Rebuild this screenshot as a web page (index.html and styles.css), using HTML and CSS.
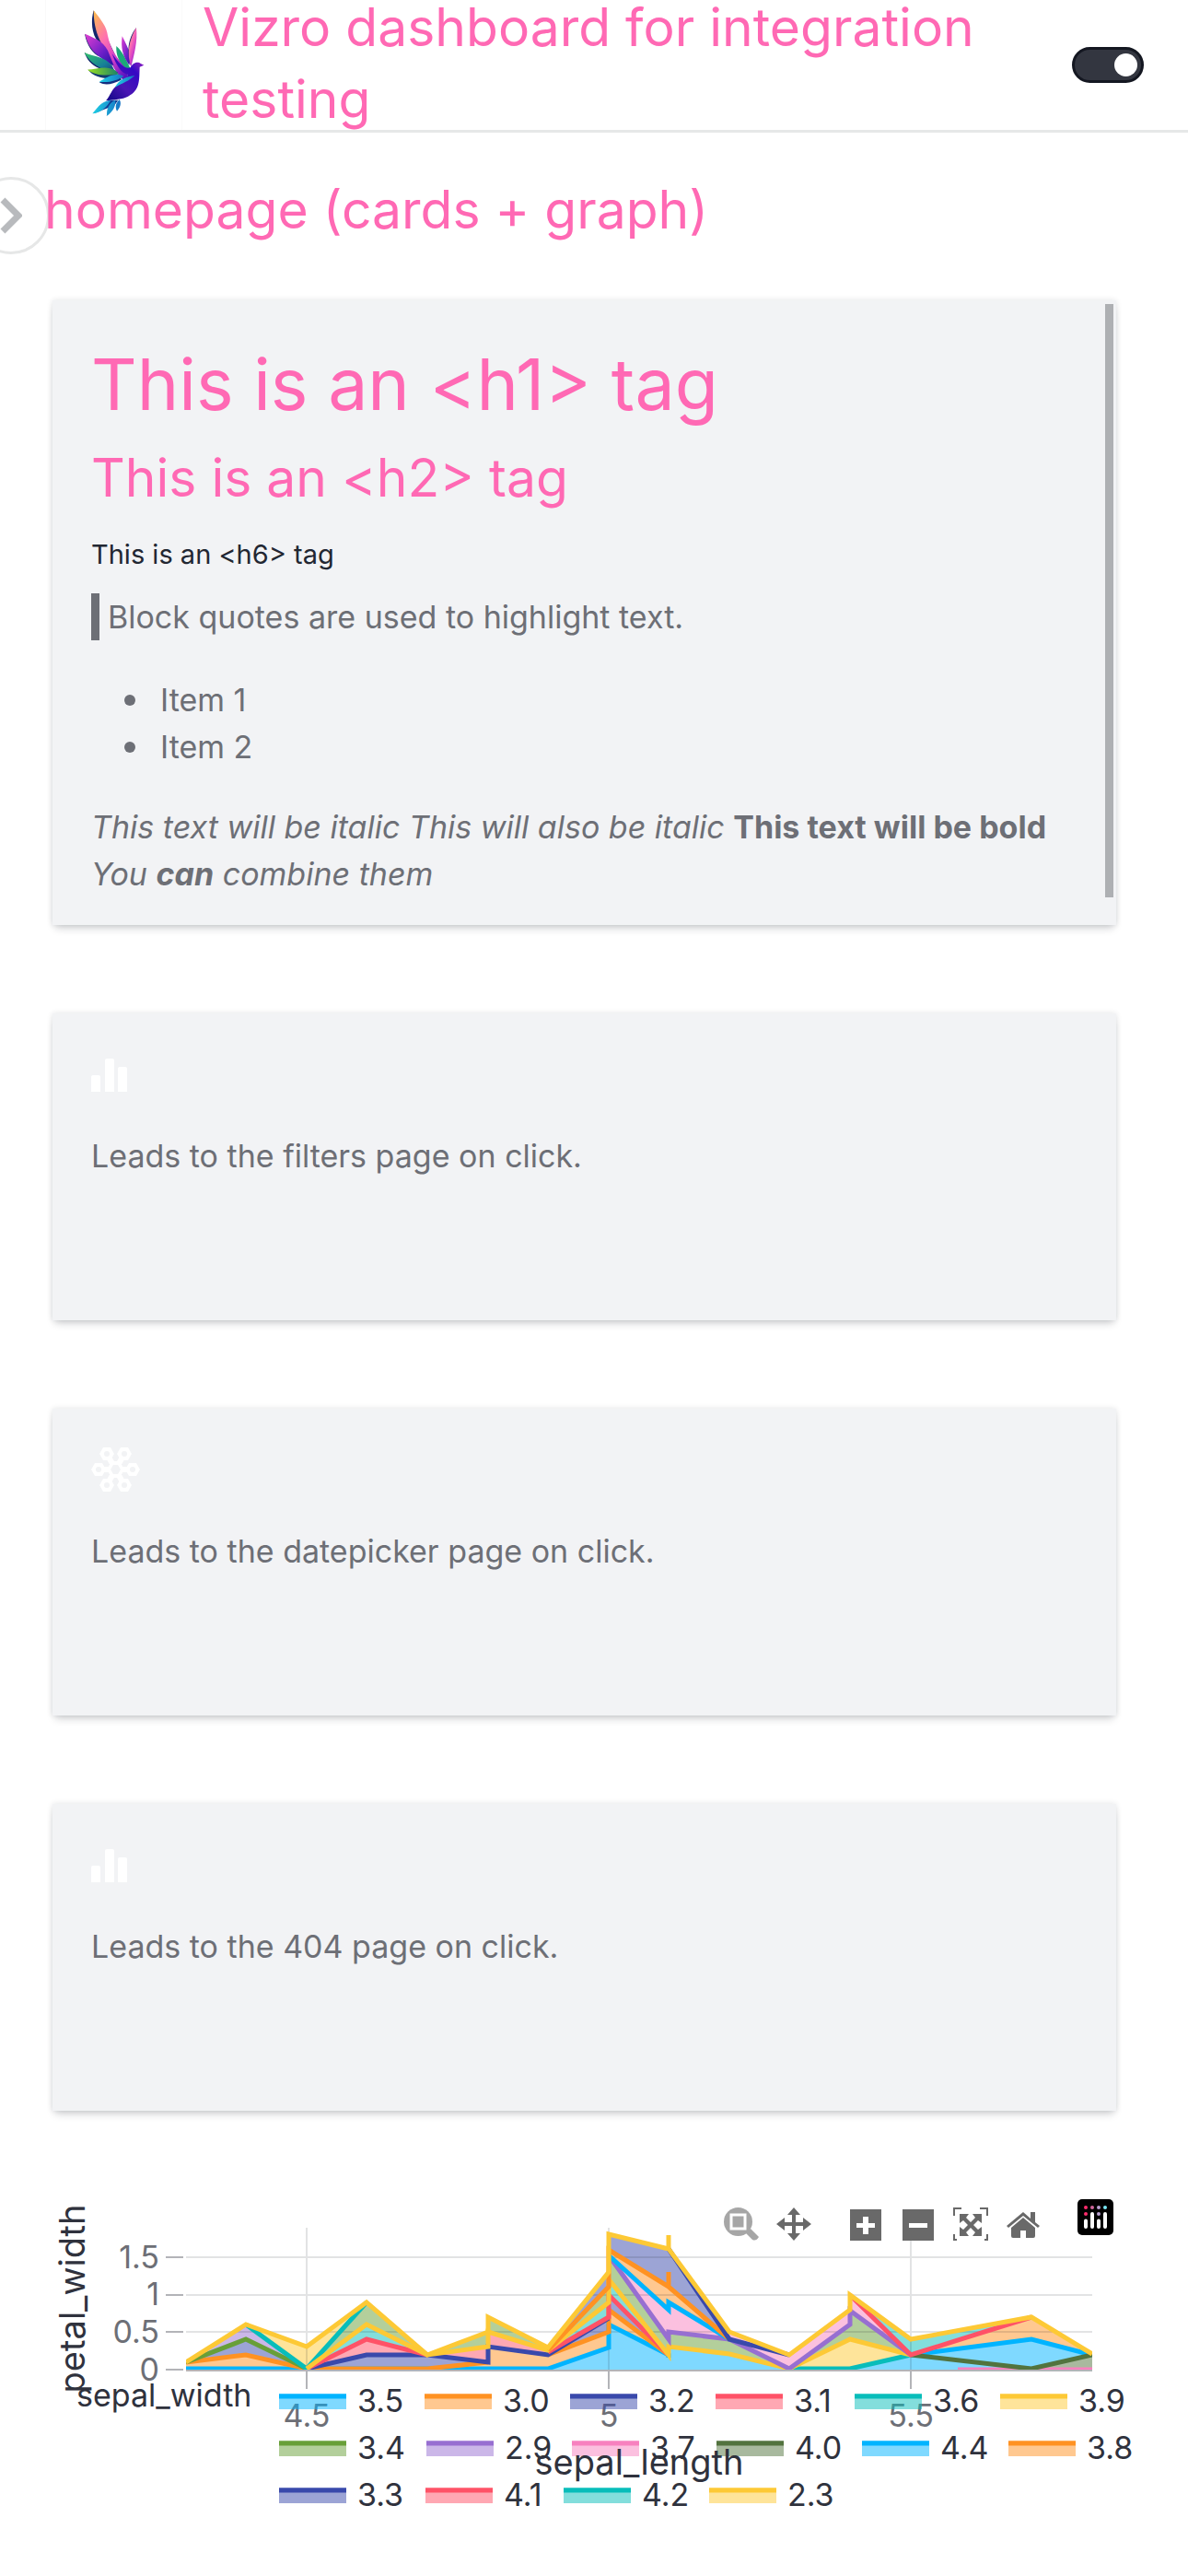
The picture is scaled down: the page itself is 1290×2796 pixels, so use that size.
FILE: index.html
```html
<!DOCTYPE html>
<html lang="en">
<head>
<meta charset="utf-8">
<meta name="viewport" content="width=device-width, initial-scale=1">
<title>Vizro dashboard for integration testing</title>
<link rel="stylesheet" href="styles.css">
</head>
<body>
<header class="header">
  <div class="logo">
    <svg viewBox="0 0 240 375" class="bird" aria-label="Logo">
      <defs>
        <linearGradient id="w1" x1="0" y1="0" x2="0.7" y2="1"><stop offset="0" stop-color="#fbc04b"/><stop offset=".4" stop-color="#ff70b0"/><stop offset=".7" stop-color="#d23fc8"/><stop offset="1" stop-color="#5a14c0"/></linearGradient>
        <linearGradient id="w2" x1="0" y1="0" x2="1" y2="1"><stop offset="0" stop-color="#e23fd0"/><stop offset=".6" stop-color="#6a1fc8"/><stop offset="1" stop-color="#2411a0"/></linearGradient>
        <linearGradient id="w3" x1="0" y1="0" x2="1" y2="1"><stop offset="0" stop-color="#35c46a"/><stop offset=".6" stop-color="#168098"/><stop offset="1" stop-color="#1b2f80"/></linearGradient>
        <linearGradient id="w4"><stop offset="0" stop-color="#9be21e"/><stop offset="1" stop-color="#16806a"/></linearGradient>
        <linearGradient id="w5"><stop offset="0" stop-color="#1fd0e4"/><stop offset="1" stop-color="#1673c4"/></linearGradient>
        <linearGradient id="w6" x1="1" y1="0" x2="0.2" y2="1"><stop offset="0" stop-color="#c02fc0"/><stop offset=".35" stop-color="#3508c4"/><stop offset=".7" stop-color="#4a16b4"/><stop offset="1" stop-color="#1c0a90"/></linearGradient>
      </defs>
      <path fill="#12246c" d="M62 10C52 45 56 88 76 112L140 176 130 150Z"/>
      <path fill="url(#w1)" d="M62 10C87 42 104 62 108 92C116 132 138 170 166 190L180 250C140 230 122 190 108 150C92 124 62 88 62 10Z"/>
      <path fill="#12246c" d="M33 86C40 125 60 152 82 160L124 190 104 150Z"/>
      <path fill="url(#w2)" d="M34 86C66 102 92 108 108 140L128 190C92 168 48 150 34 86Z"/>
      <path fill="#12246c" d="M32 147C44 180 64 194 92 202L132 214Z"/>
      <path fill="url(#w3)" d="M32 147C66 162 98 160 122 190L134 214C94 202 56 192 32 147Z"/>
      <path fill="#123a70" d="M44 203C62 226 92 234 132 230L140 210Z"/>
      <path fill="url(#w4)" d="M42 203C72 202 104 188 134 206L144 218C110 220 72 226 42 203Z"/>
      <path fill="#142e80" d="M80 244C102 256 122 250 152 236L150 224Z"/>
      <path fill="url(#w5)" d="M80 242C102 230 128 210 160 224C140 238 112 246 80 242Z"/>
      <path fill="#1ba878" d="M136 126C134 154 144 180 170 200L182 200C166 166 156 144 136 126Z"/>
      <path fill="url(#w2)" d="M155 94C150 130 156 158 178 188L184 160C174 130 164 112 155 94Z"/>
      <path fill="#16246c" d="M201 66C172 102 170 146 182 190Z"/>
      <path fill="url(#w1)" d="M201 66C206 112 194 152 184 194C168 150 178 104 201 66Z"/>
      <path fill="url(#w6)" d="M182 196C190 178 208 176 214 182L226 188 212 194C210 240 214 268 174 290C156 300 128 300 102 304C116 288 122 264 140 252C158 244 180 238 172 218C150 214 134 184 122 150C144 184 164 202 182 196Z"/>
      <path fill="url(#w5)" d="M132 260C144 234 170 226 196 222C178 240 156 246 132 260Z"/>
      <path fill="#123c94" d="M62 346L112 302 142 302 104 354 112 326Z"/>
      <path fill="url(#w5)" d="M58 346C80 318 90 306 118 302C106 322 90 342 58 346ZM106 353C102 334 112 310 132 302C136 320 124 340 106 353ZM138 338C130 322 136 310 146 300C154 312 148 328 138 338Z"/>
    </svg>
  </div>
  <h1 class="dashboard-title">Vizro dashboard for integration testing</h1>
  <input type="checkbox" class="switch" aria-label="Light theme" checked>
</header>

<main>
  <div class="page-head">
    <button class="nav-toggle" type="button" aria-label="Show navigation">
      <svg viewBox="0 0 24 42" class="chevron"><path d="M3 4L20 21 3 38"/></svg>
    </button>
    <h2 class="page-title">homepage (cards + graph)</h2>
  </div>

  <div class="cards">
    <section class="card card-tall">
      <h1>This is an &lt;h1&gt; tag</h1>
      <h2>This is an &lt;h2&gt; tag</h2>
      <h6>This is an &lt;h6&gt; tag</h6>
      <blockquote>Block quotes are used to highlight text.</blockquote>
      <ul><li>Item 1</li><li>Item 2</li></ul>
      <p><em>This text will be italic</em> <em>This will also be italic</em> <strong>This text will be bold</strong> <em>You <strong>can</strong> combine them</em></p>
      <div class="scrollbar"></div>
    </section>
    <a class="card" href="#filters">
      <svg class="icon" viewBox="0 0 48 48"><path d="M0 27q0-2 2-2h6q2 0 2 2v16H0ZM15 9q0-2 2-2h6q2 0 2 2v34H15ZM29 18q0-2 2-2h6q2 0 2 2v25H29Z"/></svg>
      <p>Leads to the filters page on click.</p>
    </a>
    <a class="card" href="#datepicker">
      <svg class="icon" viewBox="0 0 54 48">
        <path class="spokes" d="M17 7L36 41M36 7L17 41M8 24H45"/>
        <path d="M9 7l4-7h8l4 7-4 7h-8ZM28 7l4-7h8l4 7-4 7h-8ZM0 24l4-7h8l4 7-4 7H4ZM37 24l4-7h8l4 7-4 7h-8ZM9 41l4-7h8l4 7-4 7h-8ZM28 41l4-7h8l4 7-4 7h-8ZM17 24l5-9h9l5 9-5 9h-9Z"/>
        <g class="holes"><circle cx="17" cy="7" r="3"/><circle cx="36" cy="7" r="3"/><circle cx="8" cy="24" r="3"/><circle cx="45" cy="24" r="3"/><circle cx="17" cy="41" r="3"/><circle cx="36" cy="41" r="3"/><path d="M21 24l3-5h5l3 5-3 5h-5Z"/></g>
      </svg>
      <p>Leads to the datepicker page on click.</p>
    </a>
    <a class="card" href="#404">
      <svg class="icon" viewBox="0 0 48 48"><path d="M0 27q0-2 2-2h6q2 0 2 2v16H0ZM15 9q0-2 2-2h6q2 0 2 2v34H15ZM29 18q0-2 2-2h6q2 0 2 2v25H29Z"/></svg>
      <p>Leads to the 404 page on click.</p>
    </a>
  </div>

  <section class="graph" aria-label="petal_width by sepal_length">
    <svg class="plot" viewBox="0 0 1290 380">
      <defs><clipPath id="area"><rect x="202" y="33" width="984" height="161"/></clipPath></defs>
      <g clip-path="url(#area)">
        <g class="fills">
          <path class="orange" d="M202 185L267 177 333 193H202Z"/>
          <path class="navy" d="M202 185L267 160 333 193 267 177Z"/>
          <path class="purple" d="M202 185L267 144 333 193 267 160Z"/>
          <path class="yellow" d="M267 144L333 168 398 120 333 193Z"/>
          <path class="navy" d="M333 193L398 177H464L530 185 464 193Z"/>
          <path class="red" d="M333 193L398 160 464 177H398Z"/>
          <path class="teal" d="M333 193L398 144 464 177 398 160Z"/>
          <path class="green" d="M333 193L398 120 464 177 398 144Z"/>
          <path class="red" d="M464 177L530 168V185Z"/>
          <path class="green" d="M464 177L530 152V168Z"/>
          <path class="orange" d="M464 193L530 185V168L595 177 661 152V169L595 193Z"/>
          <path class="red" d="M530 168V152L595 174V177Z"/>
          <path class="green" d="M530 152V136L595 170V174Z"/>
          <path class="blue" d="M595 193L661 169V144L726 177V168L792 176 857 193Z"/>
          <path class="navy" d="M595 177L661 136V152Z"/>
          <path class="teal" d="M595 174L661 120V136Z"/>
          <path class="green" d="M595 172L661 103V120Z"/>
          <path class="navy" d="M595 170L661 87V103Z"/>
          <path class="orange" d="M661 144V128L726 177Z"/>
          <path class="navy" d="M661 128V112L726 177Z"/>
          <path class="teal" d="M661 112V95L726 177Z"/>
          <path class="green" d="M661 95V69L726 160V152L792 160 857 193 792 176 726 168V177Z"/>
          <path class="pink" d="M661 69L726 128V120L792 152 857 177 923 128V112L989 177 923 129V144L857 193 792 160 726 152V160Z"/>
          <path class="orange" d="M661 69V63L726 103 792 160 726 120V128Z"/>
          <path class="navy" d="M661 63V46L726 62 792 160 726 103Z"/>
          <path class="yellow" d="M857 193L923 160 989 177 923 192Z"/>
          <path class="green" d="M857 193L923 144V129L989 177 923 160Z"/>
          <path class="teal" d="M923 112L989 160 1120 136 989 177Z"/>
          <path class="blue" d="M923 193L989 177 1120 193ZM989 177L1120 160 1186 177 1120 192Z"/>
          <path class="orange" d="M989 177L1120 136 1186 175 1120 160Z"/>
          <path class="darkgreen" d="M1120 193L1186 177V193Z"/>
        </g>
        <path class="grid" d="M202 71H1186M202 112H1186M202 152H1186M333 39V194M661 39V194M989 39V194"/>
        <g class="lines">
          <path class="blue" d="M202 192H595L661 169V144L726 177V180"/>
          <path class="orange" d="M202 185L267 177 333 192H464L530 185"/>
          <path class="orange" d="M595 177L661 152V128L726 177"/>
          <path class="navy" d="M333 192L398 177H464L530 185V168L595 177 661 137"/>
          <path class="red" d="M333 192L398 160 464 177M595 174L661 136V112L726 177"/>
          <path class="green" d="M202 185L267 160 333 192"/>
          <path class="teal" d="M267 144L333 192 398 120M857 192H923L989 177"/>
          <path class="yellow" d="M333 192L398 144 464 177 530 168V152L595 172 661 120V95L726 177V168L792 176 857 192 923 160 989 177"/>
          <path class="purple" d="M661 69L726 160V152L792 160 857 192 923 144V129L989 177"/>
          <path class="blue" d="M661 69L726 128V120L792 160"/>
          <path class="orange" d="M595 172L661 103V63L726 103V87 103L792 160"/>
          <path class="navy" d="M726 62L792 160 857 177"/>
          <path class="pink" d="M1040 193H1186"/>
          <path class="blue" d="M989 177L1120 160 1186 177"/>
          <path class="darkgreen" d="M989 177L1120 192 1186 177"/>
          <path class="red" d="M923 112L989 177 1120 136"/>
          <path class="yellow" d="M202 185L267 144 333 168 398 120 464 177 530 152V136L595 169 661 87V46L726 62V47 62L792 152 857 177 923 128V112L989 160 1120 136 1186 176"/>
        </g>
      </g>
      <path class="axis" d="M202 194H1186M180 71H199M180 112H199M180 152H199M180 193H199M333 195V214M661 195V214M989 195V214"/>
      <g class="ticks">
        <text class="end" x="173" y="83">1.5</text><text class="end" x="173" y="123">1</text>
        <text class="end" x="173" y="164">0.5</text><text class="end" x="173" y="205">0</text>
        <text class="mid" x="333" y="255">4.5</text><text class="mid" x="661" y="255">5</text><text class="mid" x="989" y="255">5.5</text>
      </g>
      <g class="legend">
        <g transform="translate(303 219)"><rect class="blue" width="73" height="17"/><path class="blue" d="M0 3H73"/><text x="85" y="20">3.5</text></g>
        <g transform="translate(461 219)"><rect class="orange" width="73" height="17"/><path class="orange" d="M0 3H73"/><text x="85" y="20">3.0</text></g>
        <g transform="translate(619 219)"><rect class="navy" width="73" height="17"/><path class="navy" d="M0 3H73"/><text x="85" y="20">3.2</text></g>
        <g transform="translate(777 219)"><rect class="red" width="73" height="17"/><path class="red" d="M0 3H73"/><text x="85" y="20">3.1</text></g>
        <g transform="translate(928 219)"><rect class="teal" width="73" height="17"/><path class="teal" d="M0 3H73"/><text x="85" y="20">3.6</text></g>
        <g transform="translate(1086 219)"><rect class="yellow" width="73" height="17"/><path class="yellow" d="M0 3H73"/><text x="85" y="20">3.9</text></g>
        <g transform="translate(303 270)"><rect class="green" width="73" height="17"/><path class="green" d="M0 3H73"/><text x="85" y="20">3.4</text></g>
        <g transform="translate(463 270)"><rect class="purple" width="73" height="17"/><path class="purple" d="M0 3H73"/><text x="85" y="20">2.9</text></g>
        <g transform="translate(621 270)"><rect class="pink" width="73" height="17"/><path class="pink" d="M0 3H73"/><text x="85" y="20">3.7</text></g>
        <g transform="translate(778 270)"><rect class="darkgreen" width="73" height="17"/><path class="darkgreen" d="M0 3H73"/><text x="85" y="20">4.0</text></g>
        <g transform="translate(936 270)"><rect class="blue" width="73" height="17"/><path class="blue" d="M0 3H73"/><text x="85" y="20">4.4</text></g>
        <g transform="translate(1095 270)"><rect class="orange" width="73" height="17"/><path class="orange" d="M0 3H73"/><text x="85" y="20">3.8</text></g>
        <g transform="translate(303 321)"><rect class="navy" width="73" height="17"/><path class="navy" d="M0 3H73"/><text x="85" y="20">3.3</text></g>
        <g transform="translate(462 321)"><rect class="red" width="73" height="17"/><path class="red" d="M0 3H73"/><text x="85" y="20">4.1</text></g>
        <g transform="translate(612 321)"><rect class="teal" width="73" height="17"/><path class="teal" d="M0 3H73"/><text x="85" y="20">4.2</text></g>
        <g transform="translate(770 321)"><rect class="yellow" width="73" height="17"/><path class="yellow" d="M0 3H73"/><text x="85" y="20">2.3</text></g>
        <text x="83" y="233">sepal_width</text>
      </g>
      <text class="axis-title mid" x="694" y="307">sepal_length</text>
      <text class="axis-title mid" transform="translate(92 116) rotate(-90)">petal_width</text>
    </svg>
    <div class="modebar">
      <div class="group">
        <button type="button" aria-label="Zoom" class="active"><svg viewBox="0 0 38 38"><circle cx="15.500" cy="16.500" r="15.500"/><path d="M24 29l5-5 9 9q-3 5-7 3Z"/><path class="cut" d="M8 9h15v15H8Z"/></svg></button>
        <button type="button" aria-label="Pan"><svg viewBox="0 0 38 38"><path d="M19 1l7 8h-5v8h8v-5l9 7-9 7v-5h-8v8h5l-7 8-7-8h5v-8H9v5L0 19l9-7v5h8V9h-5Z"/></svg></button>
      </div>
      <div class="group">
        <button type="button" aria-label="Zoom in"><svg viewBox="0 0 38 38"><path fill-rule="evenodd" d="M2 3h34v34H2ZM16 11v7H9v5h7v7h6v-7h7v-5h-7v-7Z"/></svg></button>
        <button type="button" aria-label="Zoom out"><svg viewBox="0 0 38 38"><path fill-rule="evenodd" d="M2 3h34v34H2ZM9 18v5h20v-5Z"/></svg></button>
        <button type="button" aria-label="Autoscale"><svg viewBox="0 0 38 38"><path d="M0 1h9v2H2v7H0ZM29 1h9v9h-2V3h-7ZM0 30h2v5h2v2H0ZM36 30h2v7h-4v-2h2ZM7 8h10l-3 4 5 5 5-5-3-4h10v10l-4-3-5 5 5 5 4-3v10H21l3-4-5-5-5 5 3 4H7V22l4 3 5-5-5-5-4 3Z"/></svg></button>
        <button type="button" aria-label="Reset axes"><svg viewBox="0 0 38 38"><path d="M19 6l8 7V6h5v11l5 4-2 2-16-13L3 23l-2-2ZM19 12l13 11v9q0 2-2 2h-8v-8h-6v8H8q-2 0-2-2v-9Z"/></svg></button>
      </div>
      <a href="#plotly" class="plotly-logo" aria-label="Produced with Plotly"><svg viewBox="0 0 39 39"><rect class="black" width="39" height="39" rx="5"/><g class="bars"><path d="M9 23.500V30M16 16V30M23 23.500V30M30 16V30"/></g><circle cx="9" cy="9" r="2" fill="#ff2c6d"/><circle cx="9" cy="16" r="2" fill="#ff2c6d"/><circle cx="16" cy="9" r="2" fill="#d0669c"/><circle cx="23" cy="9" r="2" fill="#b9a0d0"/><circle cx="23" cy="16" r="2" fill="#b9a0d0"/><circle cx="30" cy="9" r="2" fill="#7ae8f5"/></svg></a>
    </div>
  </section>
</main>
</body>
</html>
```
FILE: styles.css
```css
* { box-sizing: border-box; }

body {
  margin: 0;
  background: #fff;
  color: #6d6f76;
  font-family: Inter, "Liberation Sans", sans-serif;
  font-size: 34px;
  line-height: 51px;
}

h1, h2, h6, p, blockquote, ul { margin: 0; font-weight: 400; }

.header {
  display: flex;
  align-items: center;
  height: 144px;
  padding: 0 48px 0 49px;
  border-bottom: 3px solid #e6e8e8;
}
.logo {
  display: flex;
  align-items: center;
  align-self: stretch;
  width: 149px;
  padding-left: 31px;
  border-right: 1px solid #fafafa;
  border-left: 1px solid #fafafa;
}
.bird { width: 80px; height: 125px; }
.dashboard-title, .page-title, .card h2 { font-size: 57px; line-height: 78px; color: #ff69b4; }
.dashboard-title { flex: 1; padding: 0 0 3px 22px; }
.switch {
  appearance: none;
  width: 78px;
  height: 39px;
  margin: 0 0 0 20px;
  padding: 4px;
  border: 3px solid #141721;
  border-radius: 20px;
  background: #333640;
}
.switch::before {
  content: "";
  display: block;
  width: 25px;
  height: 25px;
  margin-left: auto;
  border-radius: 50%;
  background: #fff;
}

.page-head {
  position: relative;
  padding: 45px 48px 59px;
}
.page-title { position: relative; }
.nav-toggle {
  position: absolute;
  top: 48px;
  left: -30px;
  width: 84px;
  height: 84px;
  padding: 0 0 0 27px;
  border: 3px solid #e6e7e7;
  border-radius: 50%;
  background: #fff;
  text-align: left;
}
.chevron { display: block; width: 24px; height: 42px; fill: none; stroke: #b8babd; stroke-width: 7; }

.cards {
  display: flex;
  flex-direction: column;
  gap: 96px;
  padding: 0 78px 0 57px;
}
.card {
  position: relative;
  min-height: 333px;
  padding: 42px;
  background: #f2f3f5;
  color: inherit;
  text-decoration: none;
  box-shadow: 0 6px 9px -3px rgba(20, 23, 33, .2), 0 0 6px rgba(20, 23, 33, .12);
}
.card-tall { padding-bottom: 30px; }
.card h1 { font-size: 77px; line-height: 98px; color: #ff69b4; }
.card h2 { margin-top: 14px; }
.card h6 { margin-top: 23px; font-size: 29px; line-height: 42px; color: #222732; }
.card blockquote { margin: 21px 0 39px; padding-left: 9px; border-left: 9px solid #6d6f76; }
.card ul { margin-bottom: 36px; padding-left: 36px; list-style: none; }
.card li { display: flex; align-items: center; gap: 27px; }
.card li::before {
  content: "";
  width: 12px;
  height: 12px;
  border-radius: 50%;
  background: currentColor;
}
.scrollbar {
  position: absolute;
  top: 4px;
  right: 3px;
  bottom: 30px;
  width: 9px;
  background: #aeb0b3;
}
.icon { display: block; width: auto; height: 48px; margin-bottom: 39px; fill: #fff; }
.spokes { stroke: #fff; stroke-width: 6; }
.holes { fill: #f2f3f5; }

.graph { position: relative; margin-top: 88px; }
.plot { display: block; width: 100%; height: auto; overflow: visible; }
.plot text { font-size: 34px; fill: #2f323d; }
.plot .ticks text { fill: #6d6f76; }
.plot .axis-title { font-size: 38px; }
.plot .end { text-anchor: end; }
.plot .mid { text-anchor: middle; }
.grid { fill: none; stroke: rgba(20, 23, 33, .12); stroke-width: 2; }
.axis { fill: none; stroke: #b3b4b8; stroke-width: 2; }
.lines path { fill: none; stroke: currentColor; stroke-width: 5; }
.fills path, .legend rect { fill: currentColor; opacity: .5; }
.legend path { stroke: currentColor; stroke-width: 5; }
.blue { color: #00b4ff; }
.orange { color: #ff9222; }
.navy { color: #3949ab; }
.red { color: #ff5267; }
.teal { color: #08bdba; }
.yellow { color: #fdc935; }
.green { color: #689f38; }
.purple { color: #976fd1; }
.pink { color: #f781bf; }
.darkgreen { color: #52733e; }

.modebar {
  position: absolute;
  top: 8px;
  right: 81px;
  display: flex;
  gap: 40px;
}
.group { display: flex; gap: 19px; padding-top: 8px; }
.modebar button { width: 38px; height: 38px; padding: 0; border: 0; background: none; }
.modebar svg { display: block; width: 100%; fill: #696969; }
.modebar .active svg { fill: #a6a6a6; }
.modebar .cut { stroke: #fff; stroke-width: 3; }
.modebar .plotly-logo { width: 39px; height: 39px; }
.modebar .black { fill: #000; }
.bars { stroke: #fff; stroke-width: 4; stroke-linecap: round; }
```
